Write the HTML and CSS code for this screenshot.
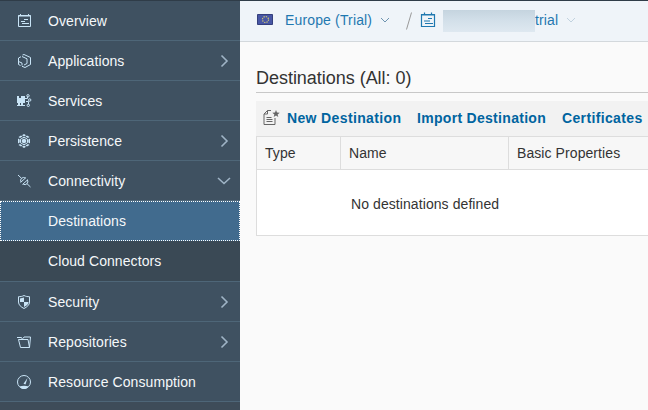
FILE: index.html
```html
<!DOCTYPE html>
<html lang="en">
<head>
<meta charset="utf-8">
<title>Destinations</title>
<link rel="stylesheet" href="styles.css">
</head>
<body>
<div class="app">
<nav class="sidebar">
  <a class="item"><svg class="icon" viewBox="0 0 16 16"><path d="M2.500 2.500h12v11h-12zM2 3h13M4.500 1v2M12.500 1v2M8 6.500h4M5 8.500h4M6 10.500h7"/></svg><span>Overview</span></a>
  <a class="item"><svg class="icon" viewBox="0 0 16 16"><path d="M6.500 2 8 1.500l6.500 3v7L9 14.500 6 13.300M4.500 12.500l-2-1V5L5 3.700M6 3.500l5 2.300v4.700l-3 1.500M2.500 8.500 6 10v2.500"/></svg><span>Applications</span><svg class="chevron" viewBox="0 0 14 14"><path d="M4.500 1.500 10 7l-5.500 5.500"/></svg></a>
  <a class="item"><svg class="icon" viewBox="0 0 16 16"><path class="solid" d="M1 3h2v2h2V3h4v7H7v2h2v1H5v-3H4v2h1v1H1v-1h1v-2H1z"/><path d="M9 5.500h2.500M10 8.500h2.500M11.500 3.500v2M12.500 8.500v3"/><circle cx="12" cy="2.800" r="1.200"/><circle cx="13.700" cy="7" r="1.200"/><circle cx="12.300" cy="12.300" r="1.200"/></svg><span>Services</span></a>
  <a class="item"><svg class="icon" viewBox="0 0 16 16"><path class="solid" d="m8 1 2 1.200-2 1.200-2-1.200zM5 2.500l1.500 1L4 5 2.500 4zM11 2.500 13.500 4 12 5 9.500 3.500zM2 5.500l1.700 1v3L2 10.500zM14 5.500l-1.700 1v3l1.700 1zM2.500 12 4 11l2.500 1.500L5 13.500zM13.500 12 12 11l-2.500 1.500 1.500 1zM8 12.600l2 1.200L8 15l-2-1.200z"/><path d="m8 4.200 3.500 2v3.600L8 11.800l-3.500-2V6.200z"/><path class="solid" d="m8 5.500 2.200 1.300v2.400L8 10.500 5.800 9.200V6.800z"/></svg><span>Persistence</span><svg class="chevron" viewBox="0 0 14 14"><path d="M4.500 1.500 10 7l-5.500 5.500"/></svg></a>
  <a class="item"><svg class="icon" viewBox="0 0 16 16"><path d="m2 2 3.500 3.300M11 10.700l3.500 3.300M4.500 9.500 10 4.500M6.500 11.500 12 6.500M5 9a3.200 3.200 0 0 1 .5-3.700A3.200 3.200 0 0 1 9.300 5M7.200 11.200a3.200 3.200 0 0 0 3.800-.5 3.200 3.200 0 0 0 .5-3.700"/></svg><span>Connectivity</span><svg class="chevron" viewBox="0 0 14 14"><path d="M1 4 7 9.500 13 4"/></svg></a>
  <a class="item sub selected"><span>Destinations</span></a>
  <a class="item sub last"><span>Cloud Connectors</span></a>
  <a class="item"><svg class="icon" viewBox="0 0 16 16"><path d="M8 1.500c2 1 3.500 1.200 5.500 1.200V8c0 3-2.500 5-5.500 6.500C5 13 2.500 11 2.500 8V2.700C4.500 2.700 6 2.500 8 1.500z"/><path class="solid" d="M8 3.500V8H4V4.500zM8 8h4.500c0 2-2 4-4.500 5z"/></svg><span>Security</span><svg class="chevron" viewBox="0 0 14 14"><path d="M4.500 1.500 10 7l-5.500 5.500"/></svg></a>
  <a class="item"><svg class="icon" viewBox="0 0 16 16"><path d="M4.500 13.500 2.500 5.500h9.500l1.500 8zM1 3.500h4.500l1 2M7 4.500l1-1.500h6.500l-1 10.500"/></svg><span>Repositories</span><svg class="chevron" viewBox="0 0 14 14"><path d="M4.500 1.500 10 7l-5.500 5.500"/></svg></a>
  <a class="item"><svg class="icon" viewBox="0 0 16 16"><circle cx="8" cy="8" r="6.500"/><path class="solid" d="m11.500 4-2 6.500-2-.8zM3.500 12.500c2.500-1 6.500-1 9 0C11 14.500 9.500 15 8 15s-3-.5-4.500-2.500z"/></svg><span>Resource Consumption</span></a>
</nav>
<main class="main">
  <header class="crumbs">
    <svg class="flag" viewBox="0 0 16 11"><path class="flag-bg" d="M.5.5h15v10H.5z"/><circle cx="8.500" cy="5.500" r="3"/></svg>
    <a class="region">Europe (Trial)</a>
    <svg class="caret" viewBox="0 0 10 6"><path d="m1 1 4 4 4-4"/></svg>
    <svg class="slash" viewBox="0 0 8 18"><path d="M6.500.5 1.500 17.500"/></svg>
    <svg class="account" viewBox="0 0 16 16"><path d="M1.500 2.500h13v12h-13zM1 3h14M4.500.5v2M11.500.5v2M8 6.500h4M4 9h6M5 11.500h8"/></svg>
    <span class="masked"></span><a class="name">trial</a>
    <svg class="caret faded" viewBox="0 0 10 6"><path d="m1 1 4 4 4-4"/></svg>
  </header>
  <section class="content">
    <h1>Destinations (All: 0)</h1>
    <div class="toolbar">
      <svg class="new" viewBox="0 0 18 18"><path d="M9 1.500H5.500L2 5v10.500h11V9M5.500 1.500V5H2M4.500 8.500h5M4.500 10.500h6M4.500 12.500h6"/><path class="star" d="m14 1 1 2.600 2.700.1-2.100 1.700.7 2.600-2.300-1.500L11.700 8l.7-2.600-2.100-1.700 2.700-.1z"/></svg>
      <a class="b1">New Destination</a><a class="b2">Import Destination</a><a class="b3">Certificates</a>
    </div>
    <div class="table">
      <div class="head"><span>Type</span><span>Name</span><span>Basic Properties</span></div>
      <div class="empty">No destinations defined</div>
    </div>
  </section>
</main>
</div>
</body>
</html>
```

FILE: styles.css
```css
* { box-sizing: border-box; }
body { margin: 0; font: 14px/20px "Liberation Sans", Arial, sans-serif; letter-spacing: .08px; color: #333; }
svg { display: block; flex: none; fill: none; }
a, span, h1 { white-space: nowrap; }
.app { display: flex; width: 648px; height: 410px; overflow: hidden; background: #fafafa; border-top: 1px solid #2f3c48; }
.sidebar { width: 240px; flex: none; background: #3e4c59; color: #f5f8fa; }
.item { display: flex; align-items: center; height: 40px; padding: 0 9px 0 16px; background: #3f5161; border-bottom: 1px solid #4e6678; }
.icon { width: 16px; height: 16px; margin-right: 16px; stroke: #c9e4f6; stroke-width: 1; }
.icon .solid { fill: #c9e4f6; stroke: none; }
.chevron { width: 14px; height: 14px; margin-left: auto; stroke: #9fb4c6; stroke-width: 1.6; }
.sub { padding-left: 48px; background: #3a4955; }
.selected { background: #416b8e; border: 1px dotted #1f5684; padding-left: 47px; outline: 1px dotted #fff; outline-offset: -1px; }
.last { height: 41px; }
.main { flex: 1; min-width: 0; }
.crumbs { display: flex; align-items: center; height: 41px; padding: 0 0 3px 17px; background: #eff4f9; border-bottom: 1px solid #d3d8dc; color: #1f78b0; }
.flag { width: 16px; height: 11px; margin-right: 12px; }
.flag-bg { fill: #4756a5; stroke: #343f7d; }
.flag circle { stroke: #d8ce70; stroke-width: 1.2; stroke-dasharray: 1.2 1.15; }
.region { width: 87px; margin-right: 8px; letter-spacing: .15px; }
.caret { width: 10px; height: 6px; stroke: #6e94b0; }
.slash { width: 8px; height: 18px; margin: 3px 7px 0 15px; stroke: #999; }
.account { width: 16px; height: 16px; margin-right: 7px; stroke: #1f78b0; stroke-width: 1.2; }
.masked { width: 92px; height: 22px; margin-top: 3px; background: linear-gradient(#c5d4df, #d3e0ea 50%, #dee8f0); }
.name { width: 23px; margin-right: 8px; letter-spacing: .15px; }
.faded { opacity: .35; }
.content { padding: 26px 0 0 16px; }
h1 { height: 25px; margin: 0 0 8px; border-bottom: 1px solid #c8c8c8; font-size: 18px; line-height: 20px; font-weight: 400; letter-spacing: -.03px; }
.toolbar { display: flex; align-items: center; height: 35px; padding: 0 0 2px 6px; background: #f2f2f2; color: #0064a0; font-weight: 700; letter-spacing: .36px; }
.new { width: 18px; height: 18px; margin-right: 7px; stroke: #666; }
.new .star { fill: #666; stroke: none; }
.b1 { width: 114px; margin-right: 16px; }
.b2 { width: 129px; margin-right: 16px; letter-spacing: .3px; }
.table { border: 1px solid #ddd; border-right: 0; background: #fff; }
.head { display: grid; grid-template-columns: 84px 168px 1fr; height: 33px; background: #f7f7f7; border-bottom: 1px solid #ddd; line-height: 32px; }
.head span { padding-left: 8px; border-right: 1px solid #ddd; }
.head span:last-child { border: 0; }
.empty { height: 65px; padding: 24px 0 0 94px; }
```
